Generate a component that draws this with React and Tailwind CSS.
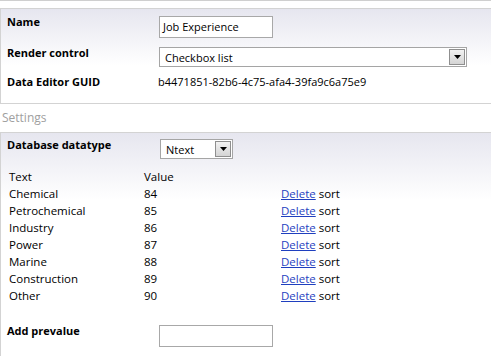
import React from 'react';

const rows = [
    ['Chemical', 84],
    ['Petrochemical', 85],
    ['Industry', 86],
    ['Power', 87],
    ['Marine', 88],
    ['Construction', 89],
    ['Other', 90],
];

function SelectBox({ value, className }) {
    return (
        <div className={`flex items-center justify-between border border-[#a5a5a5] bg-white pl-[5px] pr-[1px] ${className}`}>
            <span className="leading-none">{value}</span>
            <span className="flex h-[16px] w-[16px] items-center justify-center border border-[#8f8f8f] bg-gradient-to-b from-[#f2f2f2] to-[#d4d4d4]">
                <svg width="7" height="4" viewBox="0 0 7 4">
                    <path d="M0 0h7L3.5 4z" fill="#000" />
                </svg>
            </span>
        </div>
    );
}

function TextBox({ value }) {
    return (
        <div className="flex h-[22px] w-[114px] items-center border border-[#a8a8a8] bg-white px-[3px]">
            {value}
        </div>
    );
}

export default function App() {
    return (
        <div className="h-[356px] w-[491px] overflow-hidden bg-white text-[11px] text-black" style={{ fontFamily: '"Open Sans", "DejaVu Sans", sans-serif' }}>
            <div className="h-[2px] border-t border-[#cfcfcf]" />

            {/* properties pane */}
            <div className="mt-[6px] h-[96px] border-y border-l border-[#d3d3d3] bg-gradient-to-b from-[#e6e6ef] via-white via-60% to-white pl-[6px] pt-[7px]">
                <div className="flex h-[22px]">
                    <div className="mt-[-1px] w-[152px] font-bold leading-[14px]">Name</div>
                    <TextBox value="Job Experience" />
                </div>
                <div className="mt-[9px] flex h-[20px]">
                    <div className="mt-[-1px] w-[152px] font-bold leading-[14px]">Render control</div>
                    <SelectBox value="Checkbox list" className="h-[20px] w-[308px]" />
                </div>
                <div className="mt-[8px] flex">
                    <div className="w-[151px] font-bold leading-[14px]">Data Editor GUID</div>
                    <div className="leading-[14px]">b4471851-82b6-4c75-afa4-39fa9c6a75e9</div>
                </div>
            </div>

            <div className="pl-[2px] pt-[6px] text-[12px] leading-[16px] text-[#a0a0a0]">Settings</div>

            {/* settings pane */}
            <div className="mt-[6px] h-[224px] border-t border-l border-[#d3d3d3] bg-gradient-to-b from-[#e6e6ef] via-white via-30% to-white pl-[6px] pt-[6px]">
                <div className="flex h-[20px]">
                    <div className="mt-[-1px] w-[153px] font-bold leading-[14px]">Database datatype</div>
                    <SelectBox value="Ntext" className="h-[20px] w-[73px]" />
                </div>
                <div className="mt-[9px] pl-[2px] text-[11.5px]">
                    <div className="flex h-[17px] leading-[17px]">
                        <div className="w-[135px]">Text</div>
                        <div>Value</div>
                    </div>
                    {rows.map(([label, value]) => (
                        <div key={value} className="flex h-[17px] leading-[17px]">
                            <div className="w-[135px]">{label}</div>
                            <div className="w-[137px]">{value}</div>
                            <div>
                                <a href="#" className="text-[#1f3fbf] underline">Delete</a> sort
                            </div>
                        </div>
                    ))}
                </div>
                <div className="mt-[21px] flex">
                    <div className="mt-[-1px] w-[152px] font-bold leading-[14px]">Add prevalue</div>
                    <TextBox value="" />
                </div>
            </div>
        </div>
    );
}
